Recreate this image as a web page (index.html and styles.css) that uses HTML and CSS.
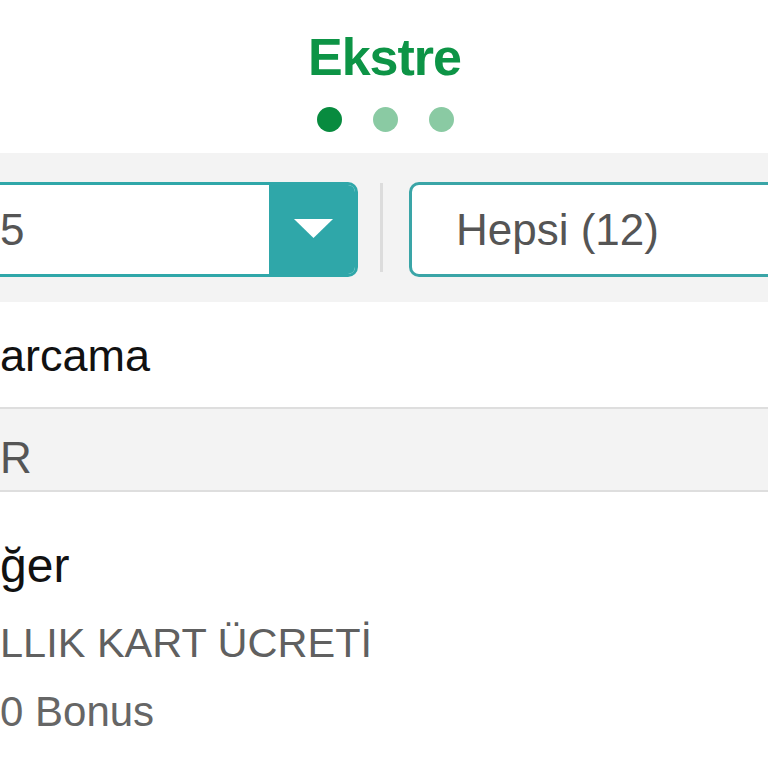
FILE: index.html
```html
<!DOCTYPE html>
<html lang="tr">
<head>
<meta charset="utf-8">
<title>Ekstre</title>
<link rel="stylesheet" href="styles.css">
</head>
<body>
<div class="screen">
  <header class="header">
    <h1 class="title">Ekstre</h1>
    <div class="dots">
      <span class="dot dot-active"></span>
      <span class="dot"></span>
      <span class="dot"></span>
    </div>
  </header>

  <section class="filters">
    <div class="select">
      <div class="select-value">5</div>
      <div class="select-btn">
        <svg width="39" height="19" viewBox="0 0 39 19"><polygon points="0,0 39,0 19.5,19" fill="#ffffff"/></svg>
      </div>
    </div>
    <div class="separator"></div>
    <div class="filter-box">Hepsi (12)</div>
  </section>

  <div class="row row-white">arcama</div>
  <div class="row row-gray">R</div>

  <section class="item">
    <div class="item-title">ğer</div>
    <div class="item-desc">LLIK KART ÜCRETİ</div>
    <div class="item-bonus">0 Bonus</div>
  </section>
</div>
</body>
</html>
```

FILE: styles.css
```css
html, body {
  margin: 0;
  padding: 0;
  background: #ffffff;
}

body {
  width: 768px;
  height: 768px;
  overflow: hidden;
  font-family: "Liberation Sans", Arial, Helvetica, sans-serif;
}

.screen {
  width: 768px;
}

.header {
  height: 153px;
  box-sizing: border-box;
  padding-top: 27px;
  display: flex;
  flex-direction: column;
  align-items: center;
}

.title {
  margin: 0;
  font-size: 52px;
  line-height: 60px;
  font-weight: bold;
  letter-spacing: -1px;
  color: #0d9446;
  padding-left: 1px;
}

.dots {
  margin-top: 20px;
  display: flex;
  gap: 31px;
  padding-left: 2px;
}

.dot {
  width: 25px;
  height: 25px;
  border-radius: 50%;
  background: #8acaa3;
}

.dot-active {
  background: #088b3f;
}

.filters {
  height: 149px;
  box-sizing: border-box;
  padding-top: 29px;
  background: #f3f3f3;
  display: flex;
  align-items: flex-start;
}

.select {
  width: 358px;
  height: 95px;
  box-sizing: border-box;
  border: 3px solid #2fa7a9;
  border-left: none;
  border-radius: 0 10px 10px 0;
  background: #ffffff;
  display: flex;
  overflow: hidden;
}

.select-value {
  flex: 1;
  display: flex;
  align-items: center;
  padding-left: 0;
  font-size: 44px;
  color: #555555;
}

.select-btn {
  flex: 0 0 86px;
  background: #2fa7a9;
  display: flex;
  align-items: center;
  justify-content: center;
  padding-left: 3px;
  box-sizing: border-box;
  padding-bottom: 3px;
}

.separator {
  margin-left: 22px;
  margin-top: 1px;
  width: 3px;
  height: 89px;
  background: #dcdcdc;
}

.filter-box {
  margin-left: 26px;
  flex: 1;
  height: 95px;
  box-sizing: border-box;
  border: 3px solid #3aa5a7;
  border-right: none;
  border-radius: 10px 0 0 10px;
  background: #ffffff;
  display: flex;
  align-items: center;
  padding-left: 44px;
  font-size: 44px;
  color: #555555;
}

.row {
  box-sizing: border-box;
}

.row-white {
  height: 107px;
  padding-top: 2px;
  font-size: 45px;
  line-height: 103px;
  color: #111111;
  border-bottom: 2px solid #dedede;
}

.row-gray {
  height: 83px;
  padding-top: 16px;
  font-size: 44px;
  line-height: 65px;
  color: #555555;
  background: #f3f3f3;
  border-bottom: 2px solid #dedede;
}

.item {
  padding-top: 39px;
}

.item-title {
  font-size: 48px;
  line-height: 70px;
  color: #111111;
}

.item-desc {
  font-size: 41.5px;
  line-height: 84px;
  color: #606060;
}

.item-bonus {
  font-size: 42px;
  line-height: 53px;
  color: #666666;
}
```
